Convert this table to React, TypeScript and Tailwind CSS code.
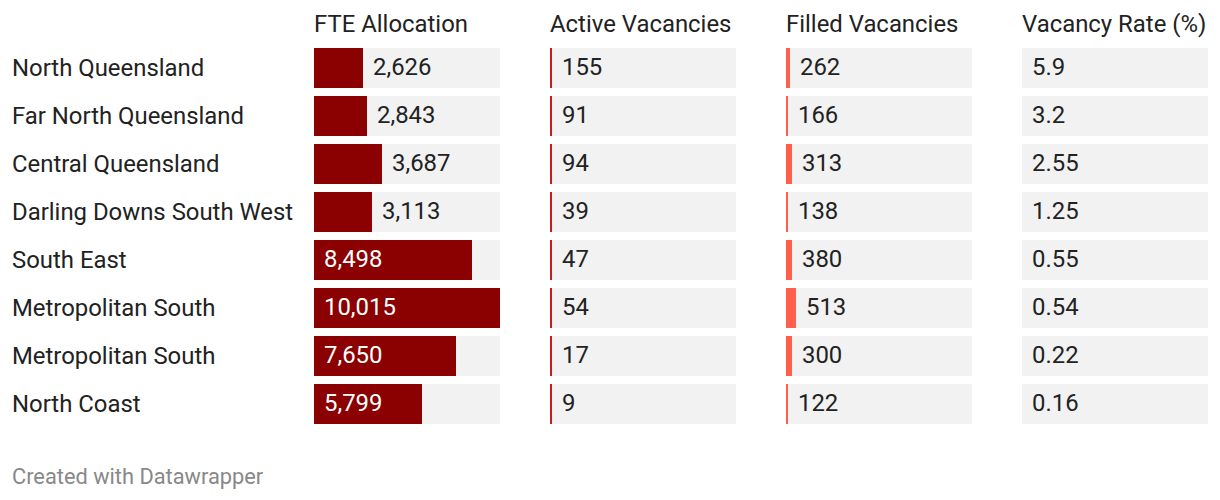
const rows = [
  { region: 'North Queensland', fte: 2626, active: 155, filled: 262, filledW: 4, rate: '5.9' },
  { region: 'Far North Queensland', fte: 2843, active: 91, filled: 166, filledW: 2, rate: '3.2' },
  { region: 'Central Queensland', fte: 3687, active: 94, filled: 313, filledW: 6, rate: '2.55' },
  { region: 'Darling Downs South West', fte: 3113, active: 39, filled: 138, filledW: 2, rate: '1.25' },
  { region: 'South East', fte: 8498, active: 47, filled: 380, filledW: 6, rate: '0.55' },
  { region: 'Metropolitan South', fte: 10015, active: 54, filled: 513, filledW: 10, rate: '0.54' },
  { region: 'Metropolitan South', fte: 7650, active: 17, filled: 300, filledW: 6, rate: '0.22' },
  { region: 'North Coast', fte: 5799, active: 9, filled: 122, filledW: 2, rate: '0.16' },
];

const MAX_FTE = 10015;
const FTE_WIDTH = 186;

const fmt = (n: number) => n.toLocaleString('en-US');

export default function App() {
  return (
    <div
      className="w-[1220px] h-[500px] bg-white text-[#222222] overflow-hidden"
      style={{ fontFamily: 'Roboto, "Liberation Sans", sans-serif' }}
    >
      <div className="grid grid-cols-[252px_186px_186px_186px_186px] gap-x-[50px] gap-y-2 pl-3 pt-[10px]">
        {/* Header */}
        <div />
        {['FTE Allocation', 'Active Vacancies', 'Filled Vacancies', 'Vacancy Rate (%)'].map(h => (
          <div key={h} className="text-[23.9px] leading-[28px] pb-[2px] whitespace-nowrap">
            {h}
          </div>
        ))}

        {rows.map((r, i) => {
          const w = Math.round((r.fte / MAX_FTE) * FTE_WIDTH);
          const inside = w > 100;
          return (
            <div key={i} className="contents">
              <div className="text-[23.9px] leading-[40px] h-10 whitespace-nowrap">{r.region}</div>

              {/* FTE allocation */}
              <div className="h-10 bg-[#f2f2f2] flex items-center">
                <div className="h-10 bg-[#8b0000] flex items-center shrink-0" style={{ width: w }}>
                  {inside && <span className="pl-[10px] text-[23.9px] text-white">{fmt(r.fte)}</span>}
                </div>
                {!inside && <span className="pl-[10px] text-[23.9px]">{fmt(r.fte)}</span>}
              </div>

              {/* Active vacancies */}
              <div className="h-10 bg-[#f2f2f2] flex items-center">
                <div className="h-10 w-[2px] bg-[#c71e1d] shrink-0" />
                <span className="pl-[10px] text-[23.9px]">{r.active}</span>
              </div>

              {/* Filled vacancies */}
              <div className="h-10 bg-[#f2f2f2] flex items-center">
                <div className="h-10 bg-[#ff604b] shrink-0" style={{ width: r.filledW }} />
                <span className="pl-[10px] text-[23.9px]">{r.filled}</span>
              </div>

              {/* Vacancy rate */}
              <div className="h-10 bg-[#f2f2f2] flex items-center">
                <span className="pl-[10px] text-[23.9px]">{r.rate}</span>
              </div>
            </div>
          );
        })}
      </div>

      <div className="pl-3 mt-[40px] text-[21.8px] leading-[26px] text-[#888888]">Created with Datawrapper</div>
    </div>
  );
}
